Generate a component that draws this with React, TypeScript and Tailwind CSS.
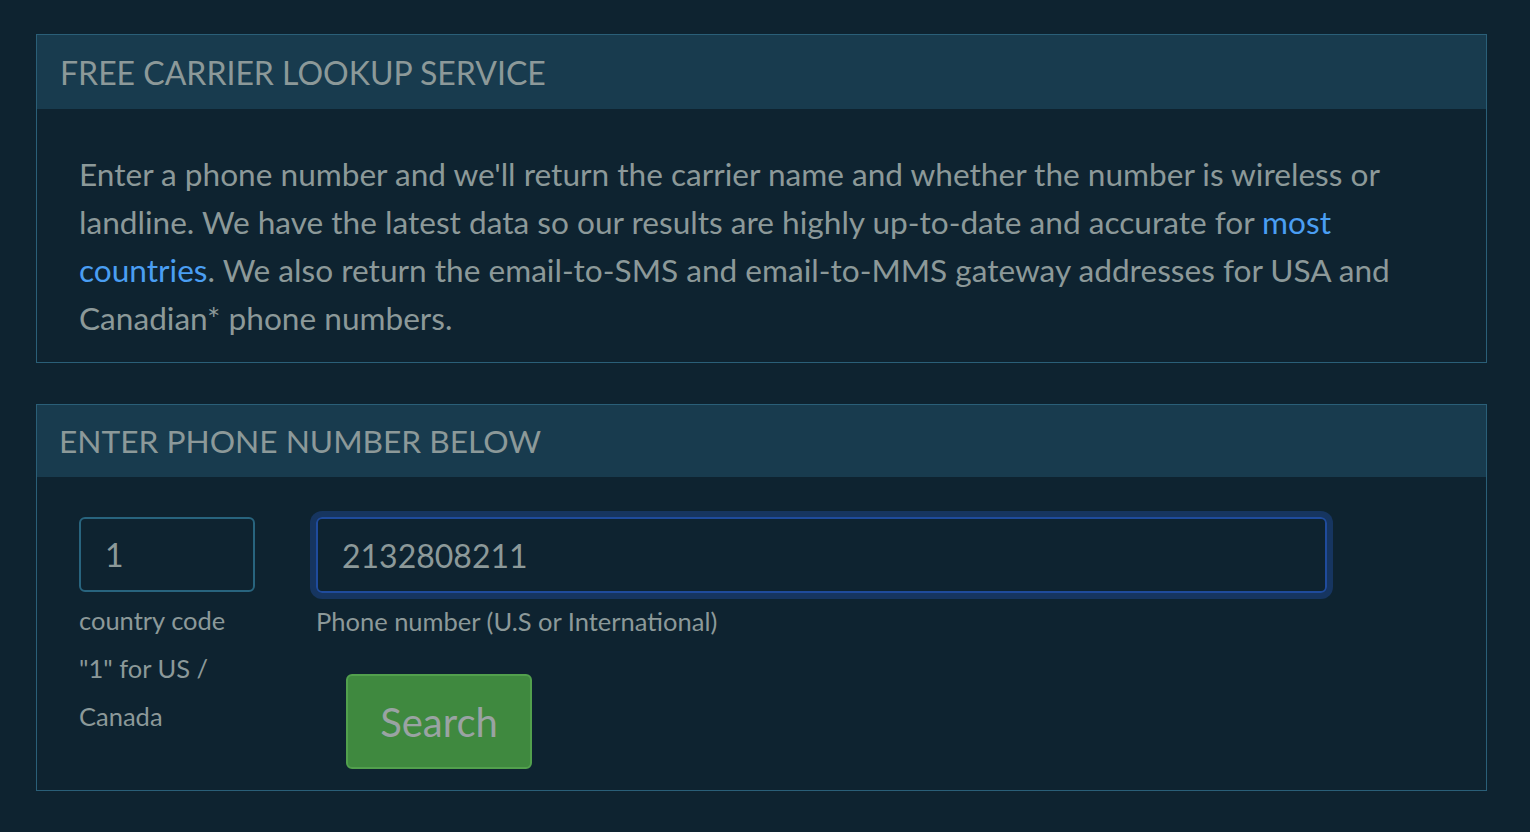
export default function App() {
  return (
    <div className="min-h-screen bg-[#0e2330] pt-[34px] pl-[36px] font-['Lato',sans-serif] text-[#8c9999]">
      <div className="w-[1451px] border border-[#2a5f78]">
        <div className="h-[74px] flex items-center pl-[23px] pt-[2px] bg-[#183b4e] text-[32px]">
          FREE CARRIER LOOKUP SERVICE
        </div>
        <p className="px-[42px] pt-[41px] pb-[20px] text-[31.6px] leading-[48px]">
          Enter a phone number and we'll return the carrier name and whether the number is wireless or landline. We have
          the latest data so our results are highly up-to-date and accurate for{" "}
          <a href="#" className="text-[#4a9ef2]">most countries</a>. We also return the email-to-SMS and email-to-MMS
          gateway addresses for USA and Canadian* phone numbers.
        </p>
      </div>

      <div className="mt-[41px] w-[1451px] border border-[#2a5f78]">
        <div className="h-[72px] flex items-center pl-[22px] pt-[2px] bg-[#183b4e] text-[31.7px]">
          ENTER PHONE NUMBER BELOW
        </div>
        <div className="flex gap-[61px] pl-[42px] pt-[40px] pb-[21px]">
          <div className="w-[176px]">
            <input
              defaultValue="1"
              className="w-[176px] h-[75px] rounded-md border-2 border-[#28647e] bg-transparent pl-[24px] text-[32px] text-[#8c9999] outline-none"
            />
            <div className="mt-[4px] text-[25.5px] leading-[48px]">country code "1" for US / Canada</div>
          </div>
          <div>
            <input
              defaultValue="2132808211"
              className="w-[1011px] h-[76px] rounded-md border-2 border-[#1f4b9c] bg-transparent pl-[24px] text-[32px] text-[#8c9999] outline-none shadow-[0_0_0_6px_#163560]"
            />
            <div className="mt-[4px] text-[25.5px] leading-[48px]">Phone number (U.S or International)</div>
            <button className="mt-[29px] ml-[30px] w-[186px] h-[95px] rounded-md border-2 border-[#52a04d] bg-[#3f893f] text-[40px] text-[#9aa3a3]">
              Search
            </button>
          </div>
        </div>
      </div>
    </div>
  );
}
